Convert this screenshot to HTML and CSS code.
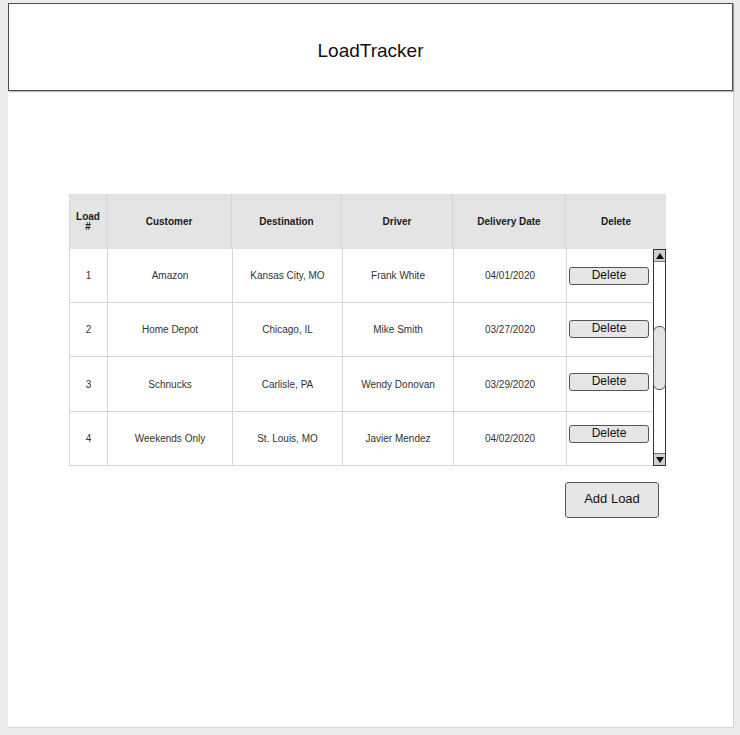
FILE: index.html
```html
<!DOCTYPE html>
<html>
<head>
<meta charset="utf-8">
<link rel="stylesheet" href="styles.css">
</head>
<body>
<div class="page">
  <header class="topbar"><h1 class="title">LoadTracker</h1></header>
  <main class="content">
    <div class="table">
      <div class="thead">
        <div class="th">Load<br>#</div>
        <div class="th">Customer</div>
        <div class="th">Destination</div>
        <div class="th">Driver</div>
        <div class="th">Delivery Date</div>
        <div class="th">Delete</div>
      </div>
      <div class="tbody-wrap">
        <div class="tbody">
          <div class="td">1</div><div class="td">Amazon</div><div class="td">Kansas City, MO</div><div class="td">Frank White</div><div class="td">04/01/2020</div><div class="td act"><button class="del del-r1">Delete</button></div>
          <div class="td">2</div><div class="td">Home Depot</div><div class="td">Chicago, IL</div><div class="td">Mike Smith</div><div class="td">03/27/2020</div><div class="td act"><button class="del del-r2">Delete</button></div>
          <div class="td">3</div><div class="td">Schnucks</div><div class="td">Carlisle, PA</div><div class="td">Wendy Donovan</div><div class="td">03/29/2020</div><div class="td act"><button class="del del-r3">Delete</button></div>
          <div class="td">4</div><div class="td">Weekends Only</div><div class="td">St. Louis, MO</div><div class="td">Javier Mendez</div><div class="td">04/02/2020</div><div class="td act"><button class="del del-r4">Delete</button></div>
        </div>
        <div class="scrollbar">
          <div class="arrow up"><span class="tri-up"></span></div>
          <div class="track"><div class="thumb"></div></div>
          <div class="arrow down"><span class="tri-down"></span></div>
        </div>
      </div>
    </div>
    <div class="actions"><button class="add">Add Load</button></div>
  </main>
</div>
</body>
</html>
```
FILE: styles.css
```css
html, body { margin: 0; padding: 0; }
body {
  background: #ececec;
  font-family: "Liberation Sans", Arial, sans-serif;
  color: #111;
  width: 740px;
  height: 735px;
  overflow: hidden;
}
.page {
  margin: 3px 6px 0 8px;
  width: 726px;
  height: 725px;
  background: #fff;
  border-right: 1px solid #d6d6d6;
  border-bottom: 1px solid #d6d6d6;
  box-sizing: border-box;
  display: flex;
  flex-direction: column;
}
.topbar {
  height: 88px;
  border: 1px solid #4d4d4d;
  box-sizing: border-box;
  display: flex;
  align-items: center;
  justify-content: center;
  box-shadow: 1px 1px 1px rgba(0,0,0,0.25);
}
.title {
  margin: 0;
  font-weight: normal;
  font-size: 19px;
  color: #111;
  position: relative;
  top: 4px;
}
.content {
  padding: 103px 0 0 61px;
  display: flex;
  flex-direction: column;
}
.table { width: 597px; }
.thead {
  display: grid;
  grid-template-columns: 38px 125px 110px 111px 113px 100px;
  height: 55px;
  background: #e4e4e4;
}
.th {
  display: flex;
  align-items: center;
  justify-content: center;
  text-align: center;
  font-size: 10px;
  font-weight: bold;
  line-height: 10px;
  color: #1a1a1a;
  border-right: 1px solid #d6d6d6;
  box-sizing: border-box;
}
.th:first-child { border-left: 1px solid #d6d6d6; }
.th:last-child { border-right: none; }
.tbody-wrap { display: flex; }
.tbody {
  display: grid;
  grid-template-columns: 38px 125px 110px 111px 113px 87px;
  grid-template-rows: 54px 54px 55px 54px;
  border-left: 1px solid #d6d6d6;
  box-sizing: border-box;
  width: 584px;
}
.td {
  display: flex;
  align-items: center;
  justify-content: center;
  font-size: 10px;
  color: #333;
  border-right: 1px solid #d6d6d6;
  border-bottom: 1px solid #d6d6d6;
  box-sizing: border-box;
}
.td.act { border-right: none; justify-content: flex-start; padding-left: 2px; }
.del {
  width: 80px;
  height: 18px;
  padding: 0 0 2px 0;
  background: #e6e6e6;
  border: 1px solid #555;
  border-radius: 3px;
  font-family: "Liberation Sans", Arial, sans-serif;
  font-size: 12px;
  line-height: 14px;
  color: #111;
}
.del-r1 { margin-top: 1px; }
.del-r2 { margin-top: -1px; }
.del-r3 { margin-top: -5px; }
.del-r4 { margin-top: -10px; }
.scrollbar {
  width: 13px;
  height: 217px;
  border: 1px solid #333;
  box-sizing: border-box;
  display: flex;
  flex-direction: column;
  background: #fff;
}
.arrow {
  height: 11px;
  background: #d0d0d0;
  display: flex;
  align-items: center;
  justify-content: center;
}
.arrow.up { border-bottom: 1px solid #777; }
.arrow.down { border-top: 1px solid #777; }
.tri-up {
  width: 0; height: 0;
  border-left: 4px solid transparent;
  border-right: 4px solid transparent;
  border-bottom: 6px solid #111;
}
.tri-down {
  width: 0; height: 0;
  border-left: 4px solid transparent;
  border-right: 4px solid transparent;
  border-top: 6px solid #111;
}
.track { flex: 1; padding-top: 64px; }
.thumb {
  height: 64px;
  background: #e4e4e4;
  border: 1px solid #555;
  border-radius: 6px;
  box-sizing: border-box;
  margin: 0 -1px;
}
.actions {
  width: 597px;
  display: flex;
  justify-content: flex-end;
  padding-top: 16px;
}
.add {
  width: 94px;
  height: 36px;
  margin-right: 7px;
  background: #e6e6e6;
  border: 1px solid #555;
  border-radius: 3px;
  font-family: "Liberation Sans", Arial, sans-serif;
  font-size: 13px;
  color: #111;
  padding: 0 0 4px 0;
}
```
